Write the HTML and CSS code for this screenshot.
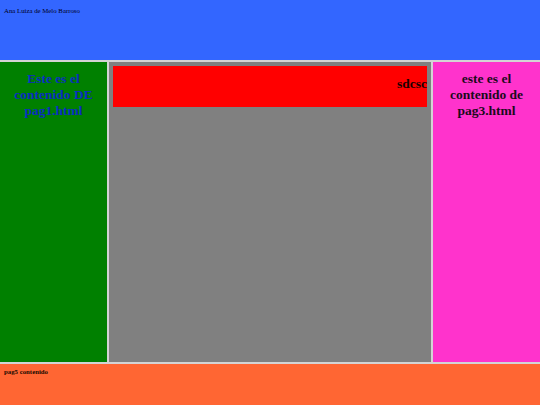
FILE: index.html
```html
<!DOCTYPE html>
<html>
<head>
<meta charset="utf-8">
<title>Frames</title>
<link rel="stylesheet" href="styles.css">
</head>
<body>
<div class="page">
  <header class="top">
    <p class="author">Ana Luiza de Melo Barroso</p>
  </header>
  <div class="hline"></div>
  <div class="middle">
    <section class="left">
      <h1 class="left-title">Este es el contenido DE pag1.html</h1>
    </section>
    <div class="vline"></div>
    <section class="center">
      <div class="redbox"><h1 class="red-title">sdcsc</h1></div>
    </section>
    <div class="vline"></div>
    <section class="right">
      <h1 class="right-title">este es el contenido de pag3.html</h1>
    </section>
  </div>
  <div class="hline"></div>
  <footer class="bottom">
    <b class="foot-text">pag5 contenido</b>
  </footer>
</div>
</body>
</html>
```

FILE: styles.css
```css
html, body {
  margin: 0;
  padding: 0;
  width: 540px;
  height: 405px;
  overflow: hidden;
}
body {
  font-family: "Liberation Serif", "Times New Roman", serif;
  color: #000;
}
.page {
  display: flex;
  flex-direction: column;
  width: 540px;
  height: 405px;
}
.top {
  height: 60px;
  background: #3366ff;
  padding: 0 4px;
  box-sizing: border-box;
  display: flow-root;
}
.author {
  margin: 6.7px 0 0 0;
  font-size: 6.8px;
  line-height: 7.7px;
  color: #000022;
}
.hline {
  height: 2px;
  background: #d4d4d4;
}
.middle {
  height: 300px;
  display: flex;
}
.vline {
  width: 2px;
  background: #d4d4d4;
}
.left {
  width: 107px;
  background: #008000;
  display: flow-root;
}
.center {
  width: 322px;
  background: #808080;
  padding: 4px;
  box-sizing: border-box;
}
.right {
  width: 107px;
  background: #ff33cc;
  display: flow-root;
}
.left-title, .right-title {
  margin: 8.5px 3px 0;
  font-size: 13.5px;
  line-height: 16px;
  font-weight: bold;
  text-align: center;
}
.left-title {
  color: #0a2fc0;
}
.right-title {
  color: #1a0a1a;
}
.redbox {
  background: #ff0000;
  height: 41px;
  display: flow-root;
}
.red-title {
  margin: 10px 0 0;
  font-size: 13.5px;
  line-height: 15.5px;
  font-weight: bold;
  text-align: right;
  color: #1a0000;
}
.bottom {
  flex: 1;
  background: #ff6633;
  padding: 3.5px 4px 0;
}
.foot-text {
  display: block;
  font-size: 6.8px;
  line-height: 7.7px;
  color: #1a0a00;
}
```
